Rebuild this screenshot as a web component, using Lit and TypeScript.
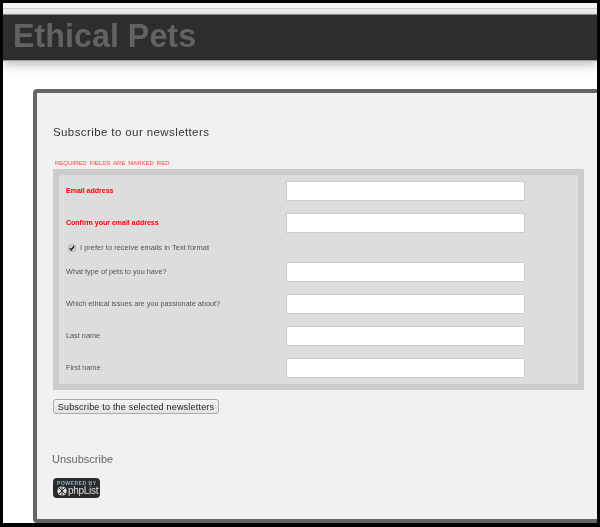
import { LitElement, html, css } from "lit";
import { customElement } from "lit/decorators.js";

const SANS = css`"Liberation Sans", Arial, sans-serif`;

@customElement("app-root")
export class AppRoot extends LitElement {
  static styles = css`
    :host {
      display: block;
      width: 600px;
      height: 527px;
      box-sizing: border-box;
      background: #000;
      padding: 3px 3px 4px 3px;
      font-family: ${SANS};
      overflow: hidden;
    }
    .page {
      height: 100%;
      background: #fff;
      overflow: hidden;
      display: flex;
      flex-direction: column;
    }
    .strip {
      height: 11px;
      flex: none;
      background: linear-gradient(#f4f4f4 0 5px, #cfcfcf 5px 6px, #eeeeee 6px);
      box-sizing: border-box;
    }
    .banner {
      flex: none;
      height: 47px;
      box-sizing: border-box;
      background: #2d2d2d;
      border-top: 1px solid #888;
      border-bottom: 1px solid #999;
      box-shadow: 0 4px 9px rgba(0, 0, 0, 0.25);
      padding-left: 10px;
      position: relative;
    }
    h1 {
      margin: 0;
      font-size: 32.3px;
      line-height: 43px;
      font-weight: bold;
      color: #626262;
      will-change: transform;
    }
    .card {
      flex: none;
      margin: 28px -6px 0 30px;
      height: 434px;
      box-sizing: border-box;
      background: #f1f1f1;
      border: 4px solid #666;
      border-radius: 4px;
      padding: 0 12px 0 16px;
      will-change: transform;
    }
    h2 {
      margin: 0;
      padding-top: 32px;
      font-size: 11.5px;
      line-height: 15px;
      font-weight: normal;
      letter-spacing: 0.4px;
      color: #333;
    }
    .note {
      margin: 19px 0 0 2px;
      font-size: 6px;
      line-height: 9px;
      color: #f44;
      word-spacing: 1.2px;
      text-transform: uppercase;
    }
    .fields {
      width: 531px;
      margin-top: 1px;
      box-sizing: border-box;
      background: #ddd;
      border: 6px solid #ccc;
      padding-left: 7px;
    }
    .row {
      display: grid;
      grid-template-columns: 220px 239px;
      align-items: center;
      height: 32px;
      font-size: 7.3px;
      color: #555;
    }
    .row.req {
      color: #f00;
      font-size: 7px;
      font-weight: bold;
    }
    .row span {
      position: relative;
      top: -1px;
    }
    .box {
      width: 239px;
      height: 20px;
      box-sizing: border-box;
      background: #fff;
      border: 1px solid #ccc;
    }
    .check {
      display: flex;
      align-items: center;
      gap: 4px;
      height: 17px;
      padding-left: 2px;
      font-size: 7.5px;
      color: #555;
    }
    .tick {
      width: 8px;
      height: 8px;
      flex: none;
      display: block;
    }
    button {
      display: block;
      margin-top: 9px;
      width: 166px;
      height: 15px;
      padding: 0;
      box-sizing: border-box;
      background: linear-gradient(#f6f6f6, #e2e2e2);
      border: 1px solid #aaa;
      border-radius: 3px;
      font: 9px ${SANS};
      letter-spacing: 0.2px;
      color: #222;
      white-space: nowrap;
    }
    .unsub {
      margin-top: 38px;
      font-size: 11px;
      line-height: 14px;
      color: #666;
      margin-left: -1px;
    }
    .logo {
      margin-top: 12px;
      width: 47px;
      height: 20px;
      box-sizing: border-box;
      border-radius: 4px;
      background: #2b2b2b;
      padding: 2px 3px 0 4px;
      color: #fff;
    }
    .powered {
      font-size: 5px;
      line-height: 6px;
      letter-spacing: 0.55px;
      color: #8fb3c9;
      font-weight: bold;
      white-space: nowrap;
    }
    .brand {
      display: flex;
      align-items: center;
      gap: 1px;
      font-size: 10px;
      line-height: 10px;
      letter-spacing: -0.3px;
      color: #ddd;
    }
    .globe {
      width: 10px;
      height: 10px;
      flex: none;
      display: block;
    }
  `;

  private field(label: string, req = false) {
    return html`<div class="row ${req ? "req" : ""}">
      <span>${label}</span>
      <div class="box"></div>
    </div>`;
  }

  render() {
    return html`<div class="page">
      <div class="strip"></div>
      <div class="banner"><h1>Ethical Pets</h1></div>
      <div class="card">
        <h2>Subscribe to our newsletters</h2>
        <div class="note">Required fields are marked red</div>
        <div class="fields">
          ${this.field("Email address", true)}
          ${this.field("Confirm your email address", true)}
          <div class="check">
            <svg class="tick" viewBox="0 0 8 8">
              <rect x="0.5" y="0.5" width="7" height="7" rx="1.5" fill="#cfcfcf" stroke="#bbb" />
              <path d="M1.8 4.2 L3.3 5.8 L6.2 2" fill="none" stroke="#222" stroke-width="1.4" />
            </svg>
            <span>I prefer to receive emails in Text format</span>
          </div>
          ${this.field("What type of pets to you have?")}
          ${this.field("Which ethical issues are you passionate about?")}
          ${this.field("Last name")}
          ${this.field("First name")}
        </div>
        <button>Subscribe to the selected newsletters</button>
        <div class="unsub">Unsubscribe</div>
        <div class="logo">
          <div class="powered">POWERED BY</div>
          <div class="brand">
            <svg class="globe" viewBox="0 0 10 10">
              <circle cx="5" cy="5" r="4.6" fill="#ddd" />
              <path d="M2 2 L8 8 M8 2 L2 8 M5 .5 V9.5" stroke="#2b2b2b" stroke-width="1" />
            </svg>
            <span>phpList</span>
          </div>
        </div>
      </div>
    </div>`;
  }
}
